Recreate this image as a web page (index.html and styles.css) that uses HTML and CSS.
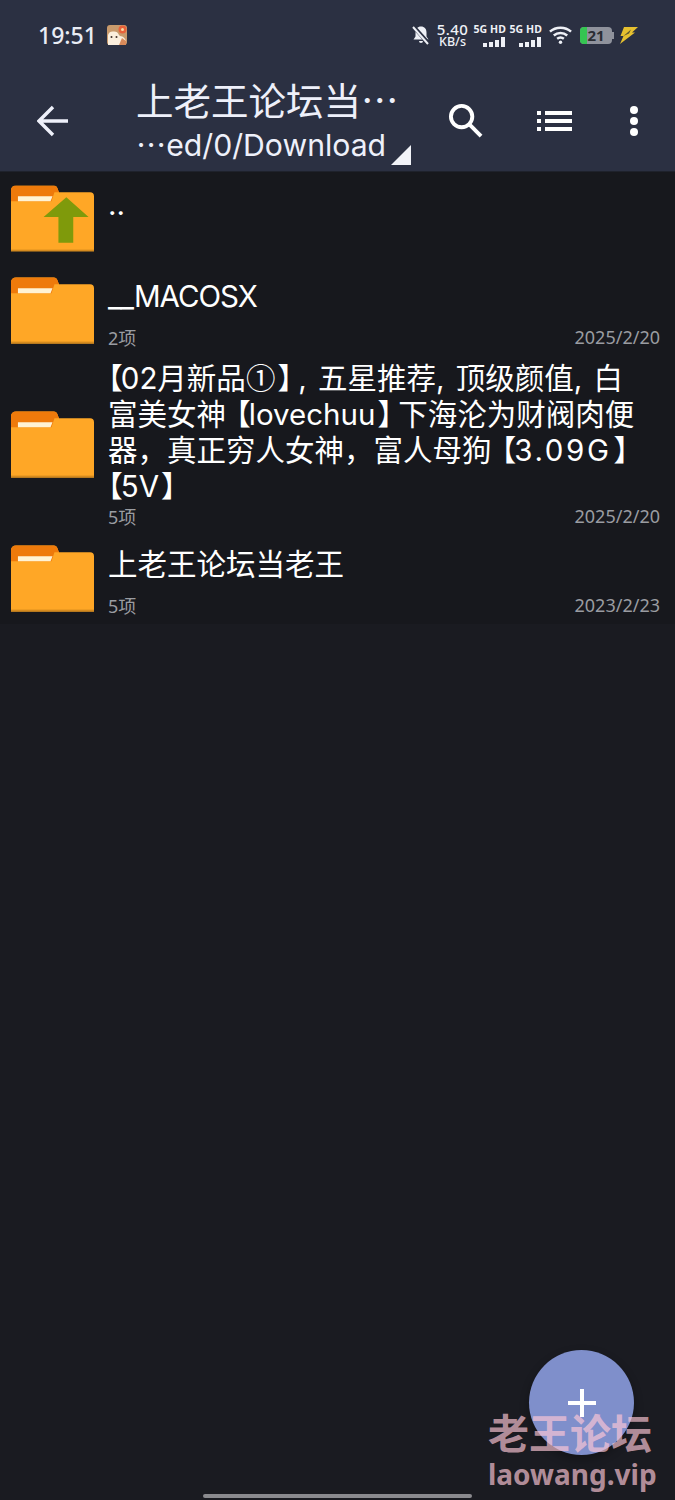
FILE: index.html
```html
<!DOCTYPE html>
<html lang="zh-CN">
<head>
<meta charset="utf-8">
<title>文件管理</title>
<link rel="stylesheet" href="styles.css">
</head>
<body>
<svg class="defs" width="0" height="0" aria-hidden="true">
  <symbol id="folder" viewBox="0 0 84 67">
    <path d="M0 5a5 5 0 0 1 5-5h38a4 4 0 0 1 4 3l1.500 4H80a4 4 0 0 1 4 4v56H0z" fill="#ffa726"/>
    <path d="M0 5a5 5 0 0 1 5-5h38a4 4 0 0 1 4 3l1.500 4H44l-3 9H0z" fill="#ee7a0b"/>
    <path d="M7 11h35l-2 5H7z" fill="#fff3d4"/>
    <rect x="0" y="65" width="84" height="2" fill="#d48a1f"/>
  </symbol>
</svg>

<div class="appbar">
  <div class="status">
    <div class="status-left">
      <span class="clock">19:51</span>
      <svg class="app-icon" width="20" height="20" viewBox="0 0 20 20">
        <rect width="20" height="20" rx="3" fill="#c99a6c"/>
        <path d="M1 20V10c1-3 3-4 6-3.500 2.500 0 4 1 5 3.500l1 1c3 0 6 3 6 6v1.500a2 2 0 0 1-2 2z" fill="#fbeedd"/>
        <path d="M12 20l3-7 4 3v4z" fill="#d98a5a"/>
        <circle cx="15.500" cy="4.500" r="4" fill="#e8613a"/>
        <circle cx="15.500" cy="4.500" r="1.500" fill="#f8d9a0"/>
        <circle cx="4.500" cy="12" r="1" fill="#40302a"/>
        <circle cx="9.500" cy="12" r="1" fill="#40302a"/>
      </svg>
    </div>
    <div class="status-right">
      <svg width="18" height="20" viewBox="0 0 18 20">
        <path d="M9 1.500c3.500 0 5.500 2.500 5.500 6v4l2 3H1.500l2-3v-4c0-3.500 2-6 5.500-6zM7 16h4a2 2 0 0 1-4 0z" fill="#eef0f6"/>
        <path d="M1 1l16 18" stroke="#2b3042" stroke-width="4"/>
        <path d="M1 2l15 17" stroke="#eef0f6" stroke-width="2"/>
      </svg>
      <div class="speed"><span class="speed-num">5.40</span><span class="speed-unit">KB/s</span></div>
      <div class="sim">
        <span class="sim-label">5G HD</span>
        <svg width="23" height="10" viewBox="0 0 23 10"><rect y="6" width="4" height="4" fill="#eef0f6"/><rect x="6" y="5" width="4" height="5" fill="#eef0f6"/><rect x="12" y="3" width="4" height="7" fill="#eef0f6"/><rect x="18" width="4" height="10" fill="#eef0f6"/></svg>
      </div>
      <div class="sim sim-next">
        <span class="sim-label">5G HD</span>
        <svg width="23" height="10" viewBox="0 0 23 10"><rect y="6" width="4" height="4" fill="#eef0f6"/><rect x="6" y="5" width="4" height="5" fill="#eef0f6"/><rect x="12" y="3" width="4" height="7" fill="#eef0f6"/><rect x="18" width="4" height="10" fill="#eef0f6"/></svg>
      </div>
      <svg width="23" height="20" viewBox="0 0 24 20" fill="none" stroke="#eef0f6" stroke-width="2.600">
        <path d="M1 6.500c6-5.500 16-5.500 22 0"/><path d="M5 10.500c4-3.500 10-3.500 14 0"/><path d="M8.500 14c2-1.500 5-1.500 7 0"/>
        <circle cx="12" cy="17.500" r="1.800" fill="#eef0f6" stroke="none"/>
      </svg>
      <div class="battery">
        <span class="battery-fill"></span>
        <span class="battery-num">21</span>
        <span class="battery-cap"></span>
      </div>
      <svg width="19" height="17" viewBox="0 0 19 17"><path d="M5 0h14L13 5.500h3L1 17l3.500-8H1.500z" fill="#e6c02f"/><path d="M4.500 9L12 2.500 10 6.500z" fill="#5c5630"/></svg>
    </div>
  </div>
  <div class="toolbar">
    <button class="back" type="button" aria-label="返回">
      <svg width="32" height="32" viewBox="0 0 32 32" fill="none" stroke="#eef0fa" stroke-width="3.400"><path d="M31 16H3M16 2L2 16l14 14"/></svg>
    </button>
    <div class="heading">
      <div class="heading-title">上老王论坛当…</div>
      <div class="heading-path">
        <span><span class="dots">…</span>ed/0/Download</span>
        <svg class="corner" width="20" height="20" viewBox="0 0 20 20"><path d="M20 0v20H0z" fill="#f2f3f8"/></svg>
      </div>
    </div>
    <div class="actions">
      <svg width="35" height="35" viewBox="0 0 36 36" fill="none" stroke="#fff" stroke-width="4"><circle cx="14" cy="14" r="11"/><path d="M22 22l12 12"/></svg>
      <svg width="36" height="20" viewBox="0 0 36 20" fill="#fff"><rect width="4" height="4"/><rect y="8" width="4" height="4"/><rect y="16" width="4" height="4"/><rect x="8" width="27" height="4"/><rect x="8" y="8" width="27" height="4"/><rect x="8" y="16" width="27" height="4"/></svg>
      <svg width="14" height="32" viewBox="0 0 14 32" fill="#fff"><circle cx="7" cy="5" r="4"/><circle cx="7" cy="16" r="4"/><circle cx="7" cy="27" r="4"/></svg>
    </div>
  </div>
</div>

<main class="list">
  <div class="row">
    <svg class="folder" width="83" height="67" viewBox="0 0 84 67">
      <use href="#folder"/>
      <path d="M56 12l22.500 20H63v26H48V32H33z" fill="#7f9a0b"/>
    </svg>
    <div class="info">
      <div class="name">..</div>
      <div class="meta"></div>
    </div>
  </div>
  <div class="row">
    <svg class="folder" width="83" height="67"><use href="#folder"/></svg>
    <div class="info">
      <div class="name"><span class="tight">__MACOSX</span></div>
      <div class="meta"><span>2项</span><span>2025/2/20</span></div>
    </div>
  </div>
  <div class="row">
    <svg class="folder" width="83" height="67"><use href="#folder"/></svg>
    <div class="info info-long">
      <div class="name"><span class="open">【</span>02月新品<span class="cjk">①</span><span class="close mid">】</span>, 五星推荐, 顶级颜值, 白<br>富美女神<span class="open mid">【</span>lovechuu<span class="close mid">】</span>下海沦为财阀肉便<br>器，真正穷人女神，富人母狗<span class="open mid">【</span><span class="wide">3.09G</span><span class="close">】</span><br><span class="open">【</span>5V<span class="close">】</span></div>
      <div class="meta"><span>5项</span><span>2025/2/20</span></div>
    </div>
  </div>
  <div class="row">
    <svg class="folder" width="83" height="67"><use href="#folder"/></svg>
    <div class="info">
      <div class="name">上老王论坛当老王</div>
      <div class="meta"><span>5项</span><span>2023/2/23</span></div>
    </div>
  </div>
</main>

<button class="fab" type="button" aria-label="新建">
  <svg width="28" height="28" viewBox="0 0 28 28" fill="#fff"><rect x="12" width="4" height="28"/><rect y="12" width="28" height="4"/></svg>
</button>
<div class="watermark">
  <div class="wm-cn">老王论坛</div>
  <div class="wm-en">laowang.vip</div>
</div>
<div class="home-bar"></div>
</body>
</html>
```

FILE: styles.css
```css
* { box-sizing: border-box; }

html, body {
  margin: 0;
  height: 1500px;
  overflow: hidden;
}

body {
  position: relative;
  background: #1a1b21;
  color: #fff;
  font-family: "Noto Sans", "Noto Sans CJK SC", sans-serif;
}

.defs { position: absolute; }

.appbar {
  height: 172px;
  background: #2b3042;
  border-bottom: 1px solid #1f222c;
  display: flex;
  flex-direction: column;
}

.status {
  flex: none;
  height: 70px;
  display: flex;
  justify-content: space-between;
  align-items: center;
  padding: 0 37px 0 38px;
}

.status-left {
  display: flex;
  align-items: center;
  gap: 10px;
}

.clock {
  font-size: 23px;
  font-weight: 500;
  color: #e9ecf4;
}

.status-right {
  display: flex;
  align-items: center;
  gap: 7px;
}

.speed {
  display: flex;
  flex-direction: column;
  align-items: center;
  width: 31px;
  color: #eef0f6;
  font-weight: 500;
}

.speed-num {
  font-size: 15px;
  letter-spacing: 0.4px;
  line-height: 13px;
}

.speed-unit {
  font-size: 12.500px;
  line-height: 11px;
}

.sim {
  display: flex;
  flex-direction: column;
  align-items: flex-end;
  width: 31px;
  gap: 2px;
  color: #eef0f6;
}

.sim-next { margin-left: -2px; }

.sim-label {
  font-size: 10.500px;
  line-height: 11px;
  font-weight: 700;
  white-space: nowrap;
  letter-spacing: 0.1px;
}

.battery {
  position: relative;
  width: 32px;
  height: 17px;
  margin-left: 1px;
  border-radius: 4px;
  background: #8f929c;
  display: flex;
  align-items: center;
  justify-content: center;
}

.battery-fill {
  position: absolute;
  left: 0;
  top: 0;
  bottom: 0;
  width: 7px;
  border-radius: 4px 0 0 4px;
  background: #35c552;
}

.battery-num {
  position: relative;
  font-size: 15px;
  line-height: 17px;
  font-weight: 700;
  color: #2b2d33;
}

.battery-cap {
  position: absolute;
  right: -2px;
  top: 5px;
  width: 2px;
  height: 7px;
  background: #8f929c;
}

.toolbar {
  flex: 1;
  display: flex;
  align-items: center;
  padding-left: 37px;
}

.back {
  width: 100px;
  padding: 0;
  border: 0;
  background: none;
  display: flex;
}

.heading {
  width: 311px;
  display: flex;
  flex-direction: column;
  gap: 4px;
  color: #eef0fa;
}

.heading-title {
  font-size: 37.500px;
  line-height: 44px;
  margin-left: -1px;
  white-space: nowrap;
  font-family: "Noto Sans CJK SC", sans-serif;
}

.heading-path {
  display: flex;
  align-items: flex-end;
  gap: 5px;
  font-family: "Inter", "Noto Sans CJK SC", sans-serif;
  font-size: 30.200px;
  line-height: 40px;
  margin-left: -1px;
  white-space: nowrap;
}

.dots {
  font-family: "Noto Sans CJK SC", sans-serif;
  line-height: 0;
}

.actions {
  flex: 1;
  display: flex;
  align-items: center;
  padding-right: 34px;
  justify-content: space-between;
}

.list {
  background: #17181d;
}

.row {
  display: flex;
  align-items: center;
  min-height: 92px;
  padding-left: 11px;
}

.folder { flex: none; }

.info {
  flex: 1;
  align-self: stretch;
  display: flex;
  flex-direction: column;
  padding: 14px 15px 7px 14px;
}

.info-long {
  padding-top: 4px;
  padding-bottom: 4px;
}

.name {
  font-family: "Inter", "Noto Sans CJK SC", sans-serif;
  font-size: 29.500px;
  line-height: 36px;
  white-space: nowrap;
  word-spacing: 3px;
}

.open, .close, .cjk {
  font-family: "Noto Sans CJK SC", sans-serif;
  line-height: 0;
}

.open, .close { font-feature-settings: "halt"; }

.open { margin-right: -2px; }
.open.mid { margin-left: 10px; }
.close { margin-left: 2px; }
.close.mid { margin-right: 6px; }

.tight { letter-spacing: -1px; }
.wide { letter-spacing: 2.600px; }

.meta {
  margin-top: auto;
  height: 24px;
  flex: none;
  display: flex;
  justify-content: space-between;
  align-items: center;
  font-size: 18px;
  color: #9a9ca1;
}

.fab {
  position: absolute;
  left: 529px;
  top: 1350px;
  width: 105px;
  height: 105px;
  padding: 0;
  border: 0;
  border-radius: 50%;
  background: #7f8fcb;
  display: flex;
  align-items: center;
  justify-content: center;
  box-shadow: 0 4px 10px rgba(0, 0, 0, .3);
}

.watermark {
  position: absolute;
  left: 488px;
  top: 1406px;
  color: rgba(255, 200, 215, .68);
  font-weight: 700;
  font-family: "Noto Sans CJK SC", sans-serif;
  white-space: nowrap;
}

.wm-cn {
  font-size: 41px;
  line-height: 50px;
}

.wm-en {
  font-size: 28px;
  line-height: 36px;
  font-family: "Noto Sans", sans-serif;
}

.home-bar {
  position: absolute;
  left: 203px;
  bottom: 2px;
  width: 269px;
  height: 4px;
  border-radius: 2px;
  background: #8a8a8e;
}
```
